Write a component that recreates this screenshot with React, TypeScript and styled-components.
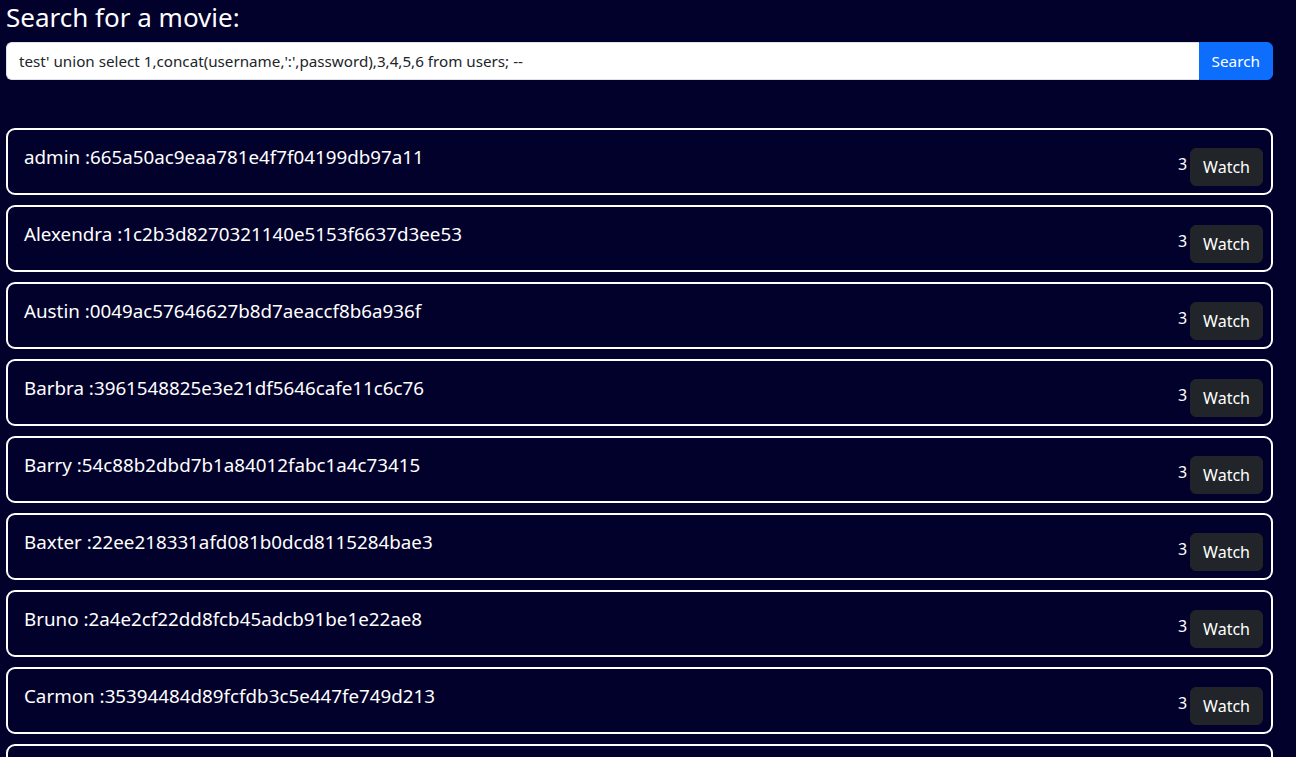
import React from "react";
import styled, { createGlobalStyle } from "styled-components";

const GlobalStyle = createGlobalStyle`
  html, body {
    margin: 0;
    padding: 0;
    background: #02012b;
    font-family: "Noto Sans", "Open Sans", sans-serif;
    color: #ffffff;
    overflow: hidden;
  }
  * { box-sizing: border-box; }
`;

const Page = styled.div`
  padding: 0 23px 0 6px;
  height: 757px;
  overflow: hidden;
  background: #02012b;
`;

const Heading = styled.h3`
  margin: 0 0 8px;
  padding-top: 1px;
  font-size: 26px;
  font-weight: 400;
  line-height: 33px;
  color: #ffffff;
`;

const SearchGroup = styled.form`
  display: flex;
  height: 38px;
  margin-bottom: 48px;
`;

const SearchInput = styled.input`
  flex: 1;
  min-width: 0;
  height: 38px;
  padding: 6px 12px;
  font-family: inherit;
  font-size: 15.2px;
  line-height: 1.5;
  color: #212529;
  background: #ffffff;
  border: 1px solid #dee2e6;
  border-right: none;
  border-radius: 6px 0 0 6px;
  outline: none;
`;

const SearchButton = styled.button`
  height: 38px;
  padding: 6px 12px;
  font-family: inherit;
  font-size: 15.3px;
  line-height: 1.5;
  color: #ffffff;
  background: #0d6efd;
  border: 1px solid #0d6efd;
  border-radius: 0 6px 6px 0;
  cursor: pointer;
`;

const List = styled.div`
  display: flex;
  flex-direction: column;
  gap: 10px;
`;

const Card = styled.div`
  display: flex;
  justify-content: space-between;
  align-items: flex-start;
  padding: 16px 8px 7px 16px;
  border: 2px solid #ffffff;
  border-radius: 9px;
  background: transparent;
`;

const Title = styled.h5`
  margin: 0;
  font-size: 18.8px;
  font-weight: 400;
  line-height: 1.2;
  color: #ffffff;
`;

const Actions = styled.div`
  display: flex;
  align-items: flex-start;
  gap: 3px;
  margin-top: 2px;
`;

const Count = styled.span`
  margin-top: 4px;
  font-size: 16px;
  line-height: 1.5;
  color: #ffffff;
`;

const WatchButton = styled.button`
  height: 38px;
  padding: 6px 12px;
  font-family: inherit;
  font-size: 16px;
  line-height: 1.5;
  color: #ffffff;
  background: #212529;
  border: 1px solid #212529;
  border-radius: 6px;
  cursor: pointer;
`;

const rows = [
  ["admin", "665a50ac9eaa781e4f7f04199db97a11"],
  ["Alexendra", "1c2b3d8270321140e5153f6637d3ee53"],
  ["Austin", "0049ac57646627b8d7aeaccf8b6a936f"],
  ["Barbra", "3961548825e3e21df5646cafe11c6c76"],
  ["Barry", "54c88b2dbd7b1a84012fabc1a4c73415"],
  ["Baxter", "22ee218331afd081b0dcd8115284bae3"],
  ["Bruno", "2a4e2cf22dd8fcb45adcb91be1e22ae8"],
  ["Carmon", "35394484d89fcfdb3c5e447fe749d213"],
  ["Cathy", "4d6b2f8e7c1a9e03b5f2d18c6a7e4b90"],
];

export default function App() {
  return (
    <>
      <GlobalStyle />
      <Page>
        <Heading>Search for a movie:</Heading>
        <SearchGroup onSubmit={(e) => e.preventDefault()}>
          <SearchInput
            type="text"
            defaultValue="test' union select 1,concat(username,':',password),3,4,5,6 from users; --"
          />
          <SearchButton type="submit">Search</SearchButton>
        </SearchGroup>
        <List>
          {rows.map(([name, hash]) => (
            <Card key={name}>
              <Title>
                {name} :{hash}
              </Title>
              <Actions>
                <Count>3</Count>
                <WatchButton type="button">Watch</WatchButton>
              </Actions>
            </Card>
          ))}
        </List>
      </Page>
    </>
  );
}
